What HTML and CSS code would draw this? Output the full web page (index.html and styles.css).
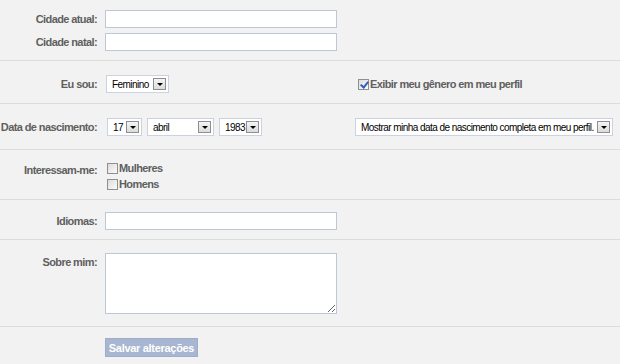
FILE: index.html
```html
<!DOCTYPE html>
<html lang="pt">
<head>
    <meta charset="UTF-8">
    <title>Editar perfil</title>
    <link rel="stylesheet" href="styles.css">
</head>
<body>
    <div class="form">
        <div class="section city">
            <div class="row">
                <label class="lbl">Cidade atual:</label>
                <div class="fields"><span class="input"></span></div>
            </div>
            <div class="row">
                <label class="lbl">Cidade natal:</label>
                <div class="fields"><span class="input"></span></div>
            </div>
        </div>

        <div class="section gender">
            <div class="row">
                <label class="lbl">Eu sou:</label>
                <div class="fields">
                    <div class="left">
                        <span class="select w-gender"><span class="val">Feminino</span><span class="arrow"></span></span>
                    </div>
                    <div class="right">
                        <span class="check checked"></span><span class="check-text">Exibir meu gênero em meu perfil</span>
                    </div>
                </div>
            </div>
        </div>

        <div class="section birth">
            <div class="row">
                <label class="lbl">Data de nascimento:</label>
                <div class="fields">
                    <div class="left dates">
                        <span class="select w-day"><span class="val">17</span><span class="arrow"></span></span>
                        <span class="select w-month"><span class="val">abril</span><span class="arrow"></span></span>
                        <span class="select w-year"><span class="val">1983</span><span class="arrow"></span></span>
                    </div>
                    <div class="right">
                        <span class="select w-show"><span class="val">Mostrar minha data de nascimento completa em meu perfil.</span><span class="arrow"></span></span>
                    </div>
                </div>
            </div>
        </div>

        <div class="section interest">
            <div class="row">
                <label class="lbl">Interessam-me:</label>
                <div class="checks">
                    <div class="check-row"><span class="check"></span><span class="check-text">Mulheres</span></div>
                    <div class="check-row"><span class="check"></span><span class="check-text">Homens</span></div>
                </div>
            </div>
        </div>

        <div class="section lang">
            <div class="row">
                <label class="lbl">Idiomas:</label>
                <div class="fields"><span class="input"></span></div>
            </div>
        </div>

        <div class="section about">
            <div class="row">
                <label class="lbl">Sobre mim:</label>
                <div class="fields"><textarea class="textarea"></textarea></div>
            </div>
        </div>

        <div class="section actions">
            <div class="row">
                <span></span>
                <div class="fields"><button class="btn" disabled>Salvar alterações</button></div>
            </div>
        </div>
    </div>
</body>
</html>
```

FILE: styles.css
```css
* {
    margin: 0;
    padding: 0;
    box-sizing: border-box;
}

body {
    font-family: 'Liberation Sans', Arial, sans-serif;
    font-size: 11px;
    background: #f2f2f2;
    color: #333;
}

.form {
    width: 620px;
}

.section {
    border-bottom: 1px solid #dcdcdc;
}

.section.city {
    padding: 10px 0 9px;
}

.section.city .row + .row {
    margin-top: 5px;
}

.section.gender {
    padding: 14px 0 10px;
}

.section.birth {
    padding: 14px 0 13px;
}

.section.interest {
    padding: 11px 0 8px;
}

.section.lang {
    padding: 12px 0 9px;
}

.section.about {
    padding: 13px 0 12px;
}

.section.actions {
    border-bottom: none;
    padding: 10px 0;
}

.row {
    display: grid;
    grid-template-columns: 97px 1fr;
    column-gap: 8px;
    align-items: start;
}

.lbl {
    text-align: right;
    font-weight: bold;
    color: #5f5f5f;
    letter-spacing: -0.6px;
    line-height: 18px;
    white-space: nowrap;
}

.fields {
    display: flex;
    align-items: center;
}

.left {
    width: 250px;
    display: flex;
    gap: 5px;
    flex-shrink: 0;
}

.left.dates {
    padding-left: 2px;
}

.right {
    display: flex;
    align-items: center;
}

.input {
    display: block;
    width: 232px;
    height: 18px;
    background: #fff;
    border: 1px solid #bdc7d8;
}

.textarea {
    display: block;
    width: 232px;
    height: 61px;
    background: #fff;
    border: 1px solid #bdc7d8;
    resize: both;
    outline: none;
}

/* fake select boxes */
.select {
    display: flex;
    align-items: center;
    justify-content: space-between;
    height: 18px;
    background: #fff;
    border: 1px solid #ccd3e0;
    padding: 0 2px 0 5px;
    color: #000;
    font-size: 10px;
    letter-spacing: -0.55px;
    white-space: nowrap;
    flex-shrink: 0;
}

.w-gender { width: 63px; margin-left: 1px; }
.w-day { width: 35px; }
.w-month { width: 67px; }
.w-year { width: 43px; }
.w-show { width: 258px; }

.arrow {
    position: relative;
    width: 13px;
    height: 12px;
    border: 1px solid #8e8e8e;
    background: linear-gradient(#f4f4f4, #dcdcdc);
    flex-shrink: 0;
}

.arrow::after {
    content: "";
    position: absolute;
    left: 3px;
    top: 4px;
    border-left: 3px solid transparent;
    border-right: 3px solid transparent;
    border-top: 3px solid #000;
}

/* checkboxes */
.check {
    position: relative;
    display: inline-block;
    width: 11px;
    height: 11px;
    border: 1px solid #8f8f8f;
    background: linear-gradient(135deg, #dcdcdc, #fbfbfb);
    flex-shrink: 0;
}

.check.checked::after {
    content: "";
    position: absolute;
    left: 3px;
    top: 0;
    width: 3px;
    height: 6px;
    border-right: 2px solid #2f5fb8;
    border-bottom: 2px solid #2f5fb8;
    transform: rotate(40deg);
}

.right .check {
    margin-left: 3px;
}

.check-text {
    font-weight: bold;
    color: #5f5f5f;
    letter-spacing: -0.6px;
    margin-left: 1px;
}

.checks {
    display: flex;
    flex-direction: column;
    gap: 2px;
    padding-left: 2px;
}

.check-row {
    display: flex;
    align-items: center;
    height: 14px;
}

.btn {
    font-family: 'Liberation Sans', Arial, sans-serif;
    font-size: 11px;
    font-weight: bold;
    color: #fff;
    letter-spacing: -0.3px;
    background: #a8b6d1;
    border: 1px solid #9eadc9;
    width: 93px;
    height: 19px;
    margin-top: 1px;
}
```
